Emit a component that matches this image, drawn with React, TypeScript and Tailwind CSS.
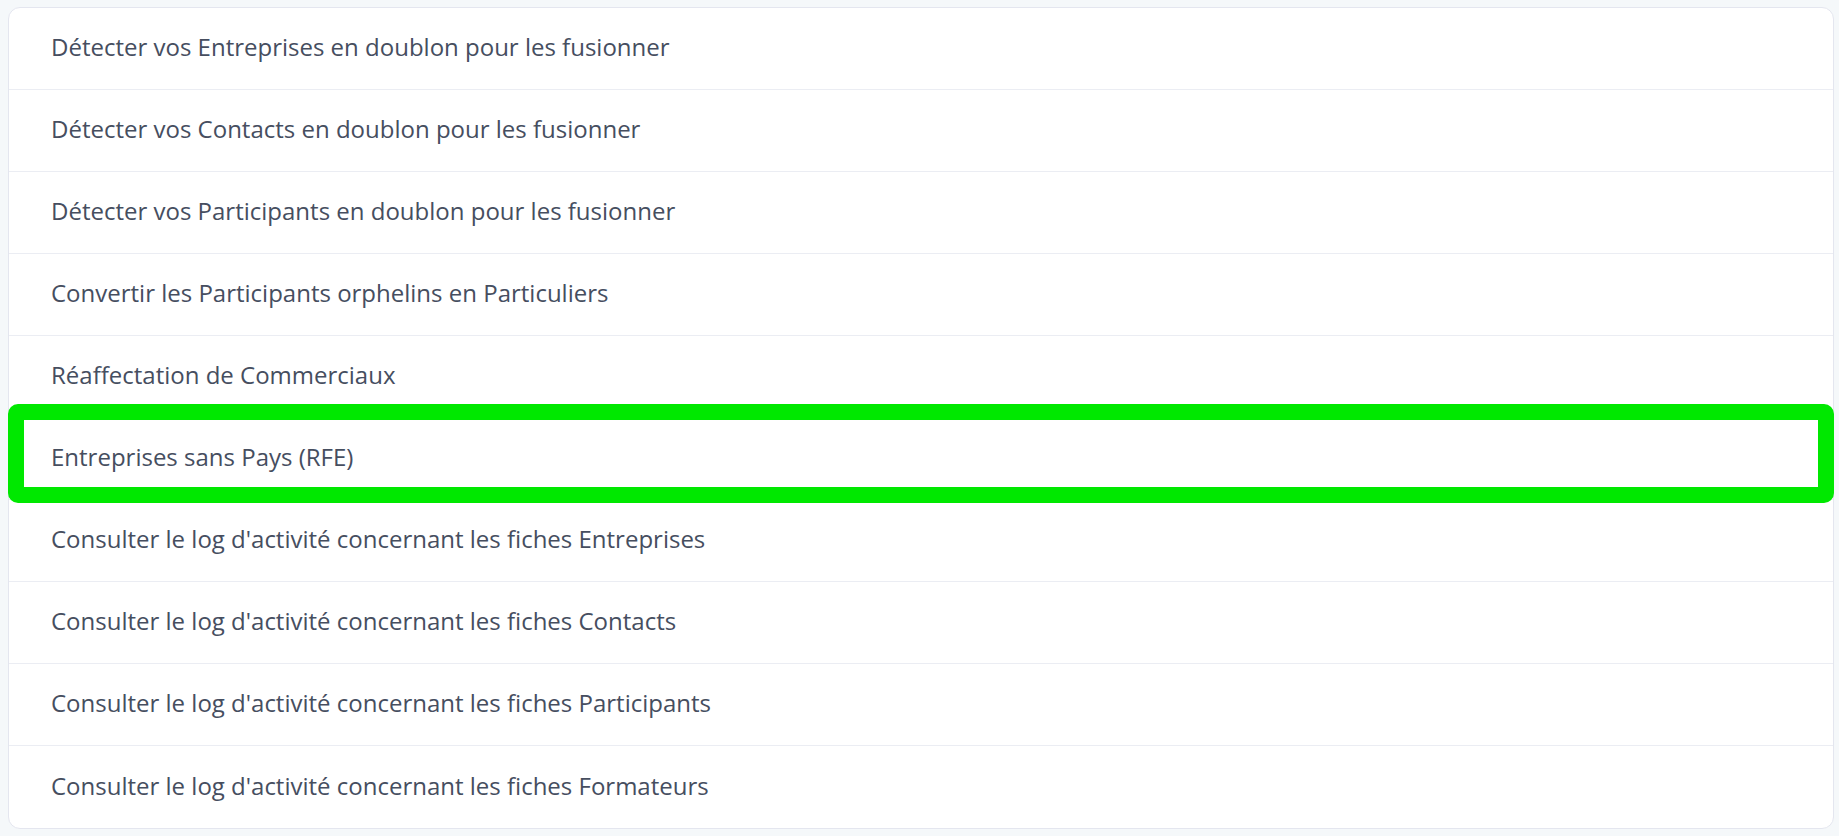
const items = [
  "Détecter vos Entreprises en doublon pour les fusionner",
  "Détecter vos Contacts en doublon pour les fusionner",
  "Détecter vos Participants en doublon pour les fusionner",
  "Convertir les Participants orphelins en Particuliers",
  "Réaffectation de Commerciaux",
  "Entreprises sans Pays (RFE)",
  "Consulter le log d'activité concernant les fiches Entreprises",
  "Consulter le log d'activité concernant les fiches Contacts",
  "Consulter le log d'activité concernant les fiches Participants",
  "Consulter le log d'activité concernant les fiches Formateurs",
];

export default function App() {
  return (
    <main className="min-h-screen bg-[#f5f8fa] pt-[7px] pl-[8px] pr-[5px] font-['Open_Sans',sans-serif]">
      <section className="relative rounded-[12px] border border-[#e4e6ef] bg-white">
        <ul>
          {items.map((label, i) => (
            <li
              key={label}
              className={
                "flex h-[82px] items-center pb-[3px] pl-[42px] text-[24px] text-[#464e5f] " +
                (i < items.length - 1 ? "border-b border-[#ebedf3]" : "h-[81px]")
              }
            >
              {label}
            </li>
          ))}
        </ul>
        {/* highlight on the RFE row */}
        <div className="pointer-events-none absolute left-[-1px] right-[-1px] top-[396px] h-[99px] rounded-[10px] border-[16px] border-[#00e800]" />
      </section>
    </main>
  );
}
